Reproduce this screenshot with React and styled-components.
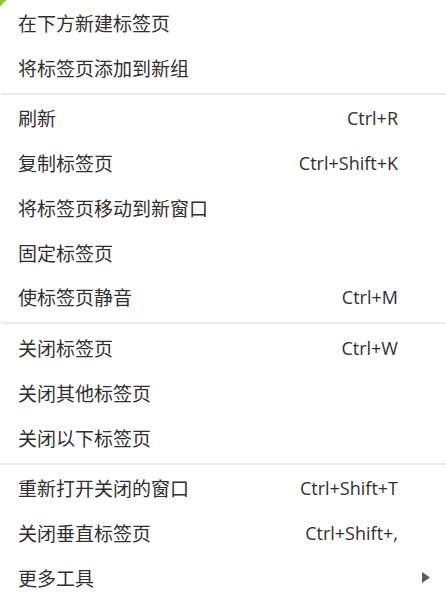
import React from 'react';
import styled, { createGlobalStyle } from 'styled-components';

const GlobalStyle = createGlobalStyle`
  html, body {
    margin: 0;
    padding: 0;
    background: #fff;
    overflow: hidden;
  }
`;

const Menu = styled.div`
  position: relative;
  width: 446px;
  height: 600px;
  overflow: hidden;
  background: #fff;
  font-family: "Noto Sans CJK SC", "Noto Sans", sans-serif;
  color: #2f2f2f;
`;

const Corner = styled.svg`
  position: absolute;
  left: 0;
  top: 0;
`;

const Row = styled.div`
  display: grid;
  grid-template-columns: 1fr auto 48px;
  align-items: center;
  height: 44.75px;
  padding-left: 18px;
  cursor: default;
`;

const Label = styled.span`
  font-size: 19px;
  line-height: 1;
  white-space: nowrap;
`;

const Shortcut = styled.span`
  font-family: "Open Sans", "Noto Sans", sans-serif;
  font-size: 18px;
  line-height: 1;
  white-space: nowrap;
`;

const ArrowCell = styled.span`
  display: flex;
  align-items: center;
  padding-left: 24px;
`;

const Separator = styled.div`
  height: 2px;
  margin: 3px 0 1px 1px;
  background: #e9e9e9;
`;

const SubArrow = () => (
  <svg width="8" height="11" viewBox="0 0 8 11">
    <polygon points="0,0 8,5.5 0,11" fill="#5a5a5a" />
  </svg>
);

const groups = [
  [
    { label: '在下方新建标签页' },
    { label: '将标签页添加到新组' },
  ],
  [
    { label: '刷新', shortcut: 'Ctrl+R' },
    { label: '复制标签页', shortcut: 'Ctrl+Shift+K' },
    { label: '将标签页移动到新窗口' },
    { label: '固定标签页' },
    { label: '使标签页静音', shortcut: 'Ctrl+M' },
  ],
  [
    { label: '关闭标签页', shortcut: 'Ctrl+W' },
    { label: '关闭其他标签页' },
    { label: '关闭以下标签页' },
  ],
  [
    { label: '重新打开关闭的窗口', shortcut: 'Ctrl+Shift+T' },
    { label: '关闭垂直标签页', shortcut: 'Ctrl+Shift+,' },
    { label: '更多工具', submenu: true },
  ],
];

const item = ({ label, shortcut, submenu }) => (
  <Row key={label}>
    <Label>{label}</Label>
    <Shortcut>{shortcut}</Shortcut>
    <ArrowCell>{submenu && <SubArrow />}</ArrowCell>
  </Row>
);

export default function App() {
  return (
    <Menu>
      <GlobalStyle />
      <Corner width="7" height="7" viewBox="0 0 7 7">
        <polygon points="0,0 6.5,0 0,6.5" fill="#8cc63f" />
      </Corner>
      {groups.map((g, i) => (
        <React.Fragment key={i}>
          {i > 0 && <Separator />}
          {g.map(item)}
        </React.Fragment>
      ))}
    </Menu>
  );
}
